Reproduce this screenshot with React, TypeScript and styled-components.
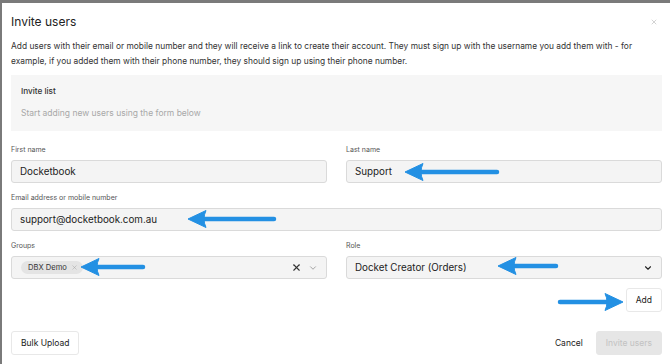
import styled, { createGlobalStyle } from "styled-components";
import { X, ChevronDown } from "lucide-react";

const GlobalStyle = createGlobalStyle`
  html, body {
    margin: 0;
    padding: 0;
    background: #7a7a7a;
    font-family: Inter, "Noto Sans", sans-serif;
    color: #222;
  }
  * { box-sizing: border-box; }
`;

const Page = styled.div`
  position: relative;
  width: 670px;
  height: 364px;
  overflow: hidden;
`;

const Modal = styled.div`
  margin: 3px 0 0 2px;
  height: 361px;
  background: #ffffff;
  padding: 11px 8px 0 9px;
  display: flex;
  flex-direction: column;
`;

const Header = styled.div`
  display: flex;
  align-items: center;
  justify-content: space-between;
  height: 16px;
`;

const Title = styled.h2`
  margin: 0;
  font-size: 12px;
  font-weight: 400;
  line-height: 16px;
  color: #222;
`;

const CloseBtn = styled.div`
  display: flex;
  align-items: center;
  margin-right: 4px;
  color: #a6a6a6;
`;

const Description = styled.p`
  margin: 9px 0 0;
  font-size: 8.4px;
  line-height: 15px;
  color: #333;
`;

const InviteList = styled.div`
  margin-top: 6px;
  height: 56px;
  background: #f6f6f6;
  padding: 11px 10px 0;
  display: flex;
  flex-direction: column;
  gap: 12px;
`;

const ListTitle = styled.div`
  font-size: 8.2px;
  line-height: 10px;
  font-weight: 500;
  color: #333;
`;

const ListEmpty = styled.div`
  font-size: 8.5px;
  line-height: 10px;
  color: #a8a8a8;
`;

const FormGrid = styled.div`
  margin-top: 14px;
  display: grid;
  grid-template-columns: 1fr 1fr;
  column-gap: 19px;
  row-gap: 10px;
`;

const Field = styled.div<{ $wide?: boolean }>`
  display: flex;
  flex-direction: column;
  gap: 5px;
  grid-column: ${(p) => (p.$wide ? "1 / span 2" : "auto")};
`;

const Label = styled.label`
  font-size: 7px;
  line-height: 10px;
  color: #555;
`;

const Input = styled.div`
  height: 23px;
  display: flex;
  align-items: center;
  padding: 0 8px;
  background: #f4f4f4;
  border: 1px solid #dadada;
  border-radius: 3px;
  font-size: 9.8px;
  color: #222;
`;

const Select = styled(Input)`
  justify-content: space-between;
  padding-right: 8px;
`;

const SelectValue = styled.div`
  display: flex;
  align-items: center;
`;

const Chip = styled.span`
  display: inline-flex;
  align-items: center;
  gap: 4px;
  height: 13px;
  padding: 0 5px 0 7px;
  margin-left: 1px;
  border-radius: 7px;
  background: #e4e4e4;
  font-size: 7.6px;
  color: #333;
`;

const Indicators = styled.div`
  display: flex;
  align-items: center;
  gap: 6px;
`;

const AddRow = styled.div`
  margin-top: 9px;
  display: flex;
  justify-content: flex-end;
`;

const Button = styled.button<{ $disabled?: boolean }>`
  height: 24px;
  padding: 0 9px;
  border: 1px solid ${(p) => (p.$disabled ? "#e6e6e6" : "#e8e8e8")};
  border-radius: 3px;
  background: ${(p) => (p.$disabled ? "#e6e6e6" : "#ffffff")};
  color: ${(p) => (p.$disabled ? "#c2c2c2" : "#222")};
  font-family: inherit;
  font-size: 8.5px;
`;

const TextButton = styled.button`
  border: none;
  background: none;
  padding: 0;
  font-family: inherit;
  font-size: 8.5px;
  color: #222;
`;

const Footer = styled.div`
  margin-top: 19px;
  display: flex;
  align-items: center;
  justify-content: space-between;
`;

const FooterRight = styled.div`
  display: flex;
  align-items: center;
  gap: 13px;
`;

const Annotations = styled.svg`
  position: absolute;
  top: 0;
  left: 0;
  pointer-events: none;
`;

type ArrowProps = { tip: number; tail: number; y: number };

function Arrow({ tip, tail, y }: ArrowProps) {
  const dir = tail > tip ? 1 : -1;
  const back = tip + dir * 18;
  const notch = tip + dir * 14;
  return (
    <g fill="#2390e3" stroke="#2390e3">
      <line x1={notch} y1={y} x2={tail} y2={y} strokeWidth={4.5} strokeLinecap="round" />
      <path
        d={`M${tip} ${y} L${back} ${y - 8.5} Q${notch} ${y} ${back} ${y + 8.5} Z`}
        strokeWidth={1}
        strokeLinejoin="round"
      />
    </g>
  );
}

export default function App() {
  return (
    <Page>
      <GlobalStyle />
      <Modal>
        <Header>
          <Title>Invite users</Title>
          <CloseBtn>
            <X size={8} strokeWidth={1.5} />
          </CloseBtn>
        </Header>
        <Description>
          Add users with their email or mobile number and they will receive a link to create their
          account. They must sign up with the username you add them with - for example, if you added
          them with their phone number, they should sign up using their phone number.
        </Description>
        <InviteList>
          <ListTitle>Invite list</ListTitle>
          <ListEmpty>Start adding new users using the form below</ListEmpty>
        </InviteList>
        <FormGrid>
          <Field>
            <Label>First name</Label>
            <Input>Docketbook</Input>
          </Field>
          <Field>
            <Label>Last name</Label>
            <Input>Support</Input>
          </Field>
          <Field $wide>
            <Label>Email address or mobile number</Label>
            <Input>support@docketbook.com.au</Input>
          </Field>
          <Field>
            <Label>Groups</Label>
            <Select>
              <SelectValue>
                <Chip>
                  DBX Demo
                  <X size={7} strokeWidth={1.5} color="#9a9a9a" />
                </Chip>
              </SelectValue>
              <Indicators>
                <X size={11} strokeWidth={2.4} color="#333" />
                <ChevronDown size={10} strokeWidth={1.8} color="#888" />
              </Indicators>
            </Select>
          </Field>
          <Field>
            <Label>Role</Label>
            <Select>
              <SelectValue>Docket Creator (Orders)</SelectValue>
              <ChevronDown size={10} strokeWidth={2.6} color="#222" />
            </Select>
          </Field>
        </FormGrid>
        <AddRow>
          <Button>Add</Button>
        </AddRow>
        <Footer>
          <Button>Bulk Upload</Button>
          <FooterRight>
            <TextButton>Cancel</TextButton>
            <Button $disabled>Invite users</Button>
          </FooterRight>
        </Footer>
      </Modal>
      <Annotations width={670} height={364} viewBox="0 0 670 364">
        <Arrow tip={405} tail={497} y={172} />
        <Arrow tip={188} tail={274} y={219} />
        <Arrow tip={81} tail={143} y={267} />
        <Arrow tip={498} tail={556} y={266} />
        <Arrow tip={623} tail={560} y={302} />
      </Annotations>
    </Page>
  );
}
